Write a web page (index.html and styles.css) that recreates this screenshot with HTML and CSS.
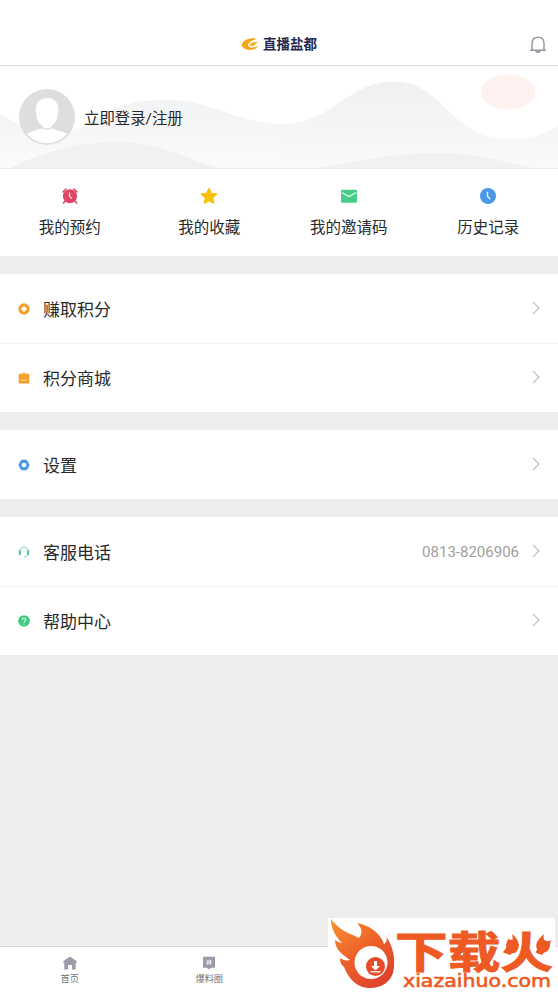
FILE: index.html
```html
<!DOCTYPE html>
<html lang="zh-CN">
<head>
<meta charset="utf-8">
<title>直播盐都</title>
<link rel="stylesheet" href="styles.css">
</head>
<body>
<div class="app">
  <header class="header">
    <div class="brand">
      <svg class="brand-mark" viewBox="0 0 20 14"><path d="M17 1C11-1 1 2 .6 7.500.4 11.700 8 14 13 12.500c2.800-.9 4.500-2.400 5-4.200-2.400 1.800-6.500 2.600-9 1.400C4.500 7.500 10 2.300 17 1Z" fill="#f0a51d"/><path d="M8.500 7.500C10.500 4.500 14 3.700 19.500 4.700 17 5 16 5.500 15.200 7 13.500 9 10 9.300 8.500 7.500Z" fill="#f3b12b"/></svg>
      <span class="brand-name">直播盐都</span>
    </div>
    <svg class="bell" viewBox="0 0 18 18"><path d="M1.200 14.300h15.600M3 14V7.500C3 3.600 5.500 1.300 9 1.300s6 2.300 6 6.200V14" fill="none" stroke="#9999a3" stroke-width="1.500"/><path d="M6 14.500h6c-.4 1.700-1.500 2.500-3 2.500s-2.600-.8-3-2.500Z" fill="#9999a3"/></svg>
  </header>
  <section class="hero">
    <svg class="waves" viewBox="0 0 558 102" preserveAspectRatio="none">
      <defs>
        <linearGradient id="wave" x1="0" y1="0" x2="0" y2="1"><stop stop-color="#eff0f2"/><stop offset="1" stop-color="#fafafb"/></linearGradient>
        <linearGradient id="back" x1="0" y1="0" x2="0" y2="1"><stop stop-color="#f2f3f4"/><stop offset="1" stop-color="#fbfbfc"/></linearGradient>
      </defs>
      <path d="M0 48C28 64 55 77 88 57 120 38 132 34 171 34 213 35 238 58 285 58V102H0Z" fill="url(#back)"/>
      <path d="M278 102V58C332 60 345 16 394 15.500 445 16 448 73 512 73 535 73 546 66 558 60V102Z" fill="url(#wave)"/>
      <path d="M10 102C50 83 83 76 119 76 165 76 190 96 221 102Z" fill="#f0f1f3"/>
      <path d="M319 102C363 94 395 87 439 87 480 87 504 97 535 102Z" fill="#f1f1f3"/>
      <ellipse cx="508" cy="26" rx="27" ry="17.500" fill="#fff1ef"/>
    </svg>
    <svg class="avatar" viewBox="0 0 56 56">
      <defs><clipPath id="face"><circle cx="28" cy="28" r="26.300"/></clipPath></defs>
      <circle cx="28" cy="28" r="28" fill="#dedede"/>
      <g clip-path="url(#face)" fill="#fff"><path d="M28 9c7.500 0 12 5 11.300 13.500C38.500 32 34 39 28 39s-10.500-7-11.300-16.500C16 14 20.500 9 28 9Z"/><path d="M4 49c3-6 9-6 17-9 1.500-.5 2.500-1.500 3-3h8c.5 1.500 1.500 2.500 3 3 8 3 14 3 17 9v8H4Z"/></g>
      <path d="M21 35c3 7 11 7 14 0" fill="none" stroke="#dedede" stroke-width="1.500"/>
    </svg>
    <span class="login">立即登录/注册</span>
  </section>
  <nav class="quick">
    <a class="quick-item"><svg class="quick-icon" viewBox="0 0 16 16"><path d="M1 4 4 1M15 4l-3-3M3 13l-1.500 2M13 13l1.500 2" stroke="#dc4763" stroke-width="1.600" stroke-linecap="round"/><circle cx="8" cy="8.300" r="7" fill="#dc4763"/><path d="M7.500 4.500v4l2.500 2" fill="none" stroke="#ffdbe0" stroke-width="1.300"/></svg><span>我的预约</span></a>
    <a class="quick-item"><svg class="quick-icon star" viewBox="0 0 18 18"><path d="m9 1.700 2.300 4.700 5.200.7-3.900 3.700 1 5.200L9 13.500 4.400 16l1-5.200-3.900-3.700 5.200-.7Z" fill="#fac010" stroke="#fac010" stroke-width="1.500" stroke-linejoin="round"/></svg><span>我的收藏</span></a>
    <a class="quick-item"><svg class="quick-icon" viewBox="0 0 16 16"><rect y="1.700" width="16" height="13" rx="1" fill="#49cb8c"/><path d="m.7 4.500 7.300 4 7.300-4" fill="none" stroke="#e3fff0" stroke-width="1.300"/></svg><span>我的邀请码</span></a>
    <a class="quick-item"><svg class="quick-icon" viewBox="0 0 16 16"><circle cx="8" cy="8" r="8" fill="#4a98e8"/><path d="M7.500 3.700v4.500l2.700 3" fill="none" stroke="#e8f5ff" stroke-width="1.400"/></svg><span>历史记录</span></a>
  </nav>
  <main>
    <section class="group">
      <a class="row"><svg class="row-icon" viewBox="0 0 12 12"><circle cx="6" cy="6" r="5.700" fill="#f3a12c"/><path d="m6 3.300 2.700 2.700L6 8.700 3.300 6Z" fill="#fff" stroke="#fff" stroke-linejoin="round" stroke-width=".6"/></svg><span class="label">赚取积分</span><svg class="arrow" viewBox="0 0 8 14"><path d="m1 1 6 6-6 6"/></svg></a>
      <a class="row"><svg class="row-icon" viewBox="0 0 12 12"><path d="M4 2.500C4 .2 8 .2 8 2.500" fill="none" stroke="#f3a12c"/><rect x=".7" y="1.800" width="10.600" height="9.700" rx=".8" fill="#f3a12c"/><path d="M3 7c1 2 5 2 6 0" fill="none" stroke="#ffe1a8"/></svg><span class="label">积分商城</span><svg class="arrow" viewBox="0 0 8 14"><path d="m1 1 6 6-6 6"/></svg></a>
    </section>
    <section class="group">
      <a class="row"><svg class="row-icon" viewBox="0 0 12 12"><path d="M3.500 1.500h5L11 6l-2.500 4.500h-5L1 6Z" fill="#4c98e4" stroke="#4c98e4" stroke-width="1.300" stroke-linejoin="round"/><circle cx="6" cy="6" r="2.300" fill="#fff"/></svg><span class="label">设置</span><svg class="arrow" viewBox="0 0 8 14"><path d="m1 1 6 6-6 6"/></svg></a>
    </section>
    <section class="group">
      <a class="row"><svg class="row-icon" viewBox="0 0 12 12"><path d="M2.500 8V4.500C2.500 0 9.500 0 9.500 4.500V8c0 2-1.500 2.700-3.500 2.900" fill="none" stroke="#73d8ae"/><path d="M1.700 4.500v4M10.300 4.500v4" stroke="#4fcb99" stroke-width="1.700" stroke-linecap="round"/></svg><span class="label">客服电话</span><span class="phone">0813-8206906</span><svg class="arrow" viewBox="0 0 8 14"><path d="m1 1 6 6-6 6"/></svg></a>
      <a class="row"><svg class="row-icon" viewBox="0 0 12 12"><circle cx="6" cy="6" r="5.800" fill="#3ecb80"/><path d="M4.200 4.700c.1-2.400 3.700-2.300 3.700 0C7.900 6 6 6 6 7.400M6 8.500v1" fill="none" stroke="#e0ffed" stroke-width="1.100"/></svg><span class="label">帮助中心</span><svg class="arrow" viewBox="0 0 8 14"><path d="m1 1 6 6-6 6"/></svg></a>
    </section>
  </main>
  <footer class="tabs">
    <a class="tab"><svg class="tab-icon" viewBox="0 0 14 14"><path d="M7 .5 13.500 5v2h-.8v6.500H9V9H5v4.500H1.300V7H.5V5Z" fill="#9b9ba9"/></svg><span>首页</span></a>
    <a class="tab"><svg class="tab-icon" viewBox="0 0 14 14"><path d="M1 .7h12v11H9L7 13.600 5 11.700H1Z" fill="#9b9ba9"/><path d="M6.200 3.700 5.500 8.700M8.700 3.700 8 8.700M4.500 5.200h5.200M4.300 7.300h5.200" stroke="#fff" stroke-width=".8"/></svg><span>爆料圈</span></a>
    <span class="tab"></span><span class="tab"></span>
  </footer>
  <aside class="badge">
    <svg viewBox="0 0 227 74" width="227" height="74">
      <defs><linearGradient id="flame" x1="0" y1="0" x2=".7" y2="1"><stop stop-color="#f9912f"/><stop offset=".55" stop-color="#ed602a"/><stop offset="1" stop-color="#dd432b"/></linearGradient></defs>
      <path d="M3 1C12 13 21 15 31 20 35 15 34 10 29 5 40 7 52 14 56 26 59 24 60 21 57 17 64 26 67 37 66 49 65 63 55 70 41 70 26 69 20 58 16 49 13 47 12 44 12 40 15 42 18 43 22 42 16 37 7 33 7 22 10 24 12 25 14 25 7 18 3 10 3 1Z" fill="url(#flame)"/>
      <circle cx="43" cy="44.500" r="16.500" fill="#fff"/>
      <circle cx="47.500" cy="48.500" r="9.500" fill="#e74b28"/>
      <path d="M46 43h3v5h3L47.500 52.500 43 48h3Z" fill="#fff"/><path d="M42.500 53.800h10" stroke="#fff" stroke-width="1.300"/>
      <text class="badge-title" x="67" y="50" textLength="158" lengthAdjust="spacingAndGlyphs">下载火</text>
      <path d="M184 16C191 22 192 27 190 31 188 37 181 36 179 31 177 27 179 23 181 20L182 25C185 24 185 20 184 16ZM216 16C209 22 207 27 209 31 212 37 219 35 221 31 223 27 221 25 224 22L219 24C216 24 215 20 216 16Z" fill="#ee5a24"/>
      <text class="badge-url" x="75" y="69" textLength="148" lengthAdjust="spacingAndGlyphs">xiazaihuo.com</text>
    </svg>
  </aside>
</div>
</body>
</html>
```
FILE: styles.css
```css
* { box-sizing: border-box; }
body { margin: 0; background: #ededed; color: #292929; font-family: Roboto, "Noto Sans CJK SC", sans-serif; }
.app { position: relative; height: 992px; display: flex; flex-direction: column; overflow: hidden; }
svg { display: block; flex-shrink: 0; }
.header { height: 66px; padding-top: 23px; background: #fff; border-bottom: 1px solid #d9d9d9; display: grid; grid-template-columns: 1fr auto 1fr; align-items: center; }
.brand { grid-column: 2; display: flex; align-items: center; gap: 3px; }
.brand-mark { width: 19px; height: 13px; }
.brand-name { color: #24294e; font-size: 13.5px; line-height: 18px; font-weight: 700; }
.bell { width: 18px; height: 18px; justify-self: end; margin: 1px 11px 0 0; }
.hero { position: relative; height: 102px; background: #fff; display: flex; align-items: center; padding-left: 19px; gap: 9px; }
.waves { position: absolute; inset: 0; width: 100%; height: 100%; }
.avatar { position: relative; width: 56px; height: 56px; }
.login { position: relative; font-size: 15.4px; line-height: 24px; padding-top: 3px; }
.quick { height: 88px; background: #fff; border-top: 1px solid #ececec; display: grid; grid-template-columns: repeat(4, 1fr); }
.quick-item { display: flex; flex-direction: column; align-items: center; padding-top: 19px; gap: 12px; font-size: 15.5px; line-height: 24px; }
.quick-icon { width: 16px; height: 16px; }
.quick-icon.star { width: 18px; height: 18px; margin: -1px 0; }
main { flex: 1; display: flex; flex-direction: column; padding-top: 18px; gap: 18.5px; }
.group { background: #fff; }
.row { height: 69px; display: flex; align-items: center; padding: 0 18px; }
.row + .row { border-top: 1px solid #f0f0f0; }
.group:nth-child(1) { height: 137.5px; }
.group:nth-child(2) { height: 68.5px; }
.row-icon { width: 12px; height: 12px; margin-right: 13px; }
.label { font-size: 17px; line-height: 26px; padding-top: 2px; }
.arrow { width: 8px; height: 14px; margin: 0 0 2px auto; fill: none; stroke: #bebebe; stroke-width: 1.1; }
.phone { margin-left: auto; color: #a0a0a0; font-size: 15px; padding-top: 1px; }
.phone + .arrow { margin-left: 13px; }
.tabs { height: 46px; background: #fff; border-top: 1px solid #d8d8d8; display: grid; grid-template-columns: repeat(4, 1fr); }
.tab { display: flex; flex-direction: column; align-items: center; padding-top: 9px; gap: 2px; color: #777; font-size: 9.2px; line-height: 13px; }
.tab-icon { width: 14px; height: 14px; }
.badge { position: absolute; left: 328px; top: 918px; width: 227px; height: 74px; background: #fff; }
.badge-title { font: 700 43px "Noto Sans CJK SC", sans-serif; fill: #ee5a24; stroke: #ee5a24; stroke-width: 1px; }
.badge-url { font: 400 17px "DejaVu Sans", sans-serif; fill: #ee5a24; stroke: #ee5a24; stroke-width: .6px; }
```
